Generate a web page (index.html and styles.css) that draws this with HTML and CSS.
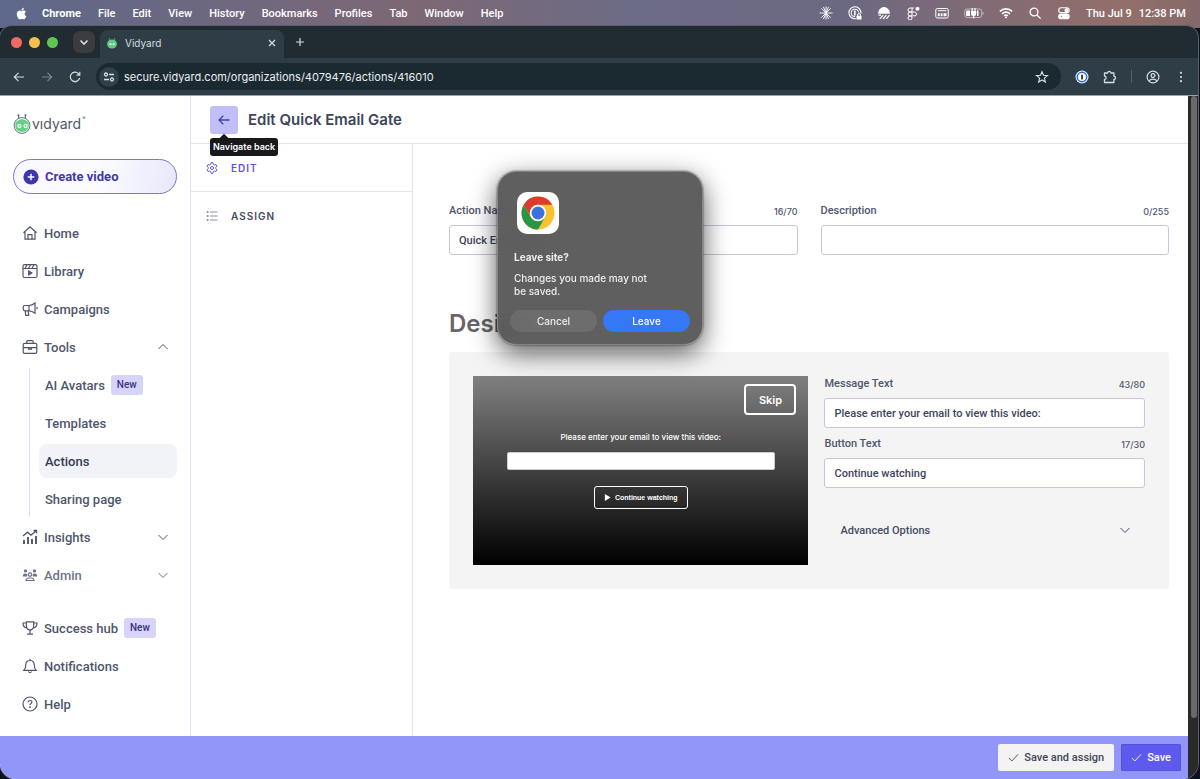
FILE: index.html
```
<!DOCTYPE html>
<html lang="en">
<head>
<meta charset="utf-8">
<title>Vidyard</title>
<link rel="stylesheet" href="styles.css">
</head>
<body>
<div class="desktop">
  <nav class="menubar" aria-label="Menu bar">
    <svg class="apple" viewBox="0 0 24 24" fill="currentColor"><path d="M17 12.700c0-2.300 1.900-3.400 2-3.500-1.100-1.600-2.800-1.800-3.400-1.900-1.400-.1-2.800.9-3.500.9s-1.900-.9-3.100-.8c-1.600 0-3 .9-3.800 2.300-1.700 2.800-.4 7 1.200 9.300.8 1.100 1.700 2.400 2.900 2.300 1.200 0 1.600-.7 3.100-.7s1.900.7 3.100.7c1.300 0 2.100-1.100 2.900-2.300.9-1.300 1.300-2.600 1.300-2.700-.1 0-2.700-1-2.700-3.600zM14.700 5.800c.6-.8 1.100-1.900 1-3-.9 0-2.100.6-2.700 1.400-.6.7-1.100 1.800-1 2.900 1 .1 2-.5 2.700-1.300z"/></svg>
    <b>Chrome</b><span>File</span><span>Edit</span><span>View</span><span>History</span><span>Bookmarks</span><span>Profiles</span><span>Tab</span><span>Window</span><span>Help</span>
    <div class="status">
      <svg viewBox="0 0 14 14" stroke="currentColor" stroke-width="1.300" stroke-linecap="round"><path d="M7 .8v12.400M.8 7h12.400M2.600 2.600l8.800 8.800M11.400 2.600l-8.800 8.800M4.600 1.300l4.800 11.400M9.400 1.300 4.600 12.700" stroke-width=".9"/></svg>
      <svg viewBox="0 0 14 14" fill="none" stroke="currentColor"><path d="M8 12.700A6 6 0 1 1 12.900 7.500" stroke-width="1.100"/><path d="M7 10.700A3.800 3.800 0 1 1 10.700 6.500" stroke-width="1"/><path d="M6.800 4.500v5" stroke-width="1.600"/><rect x="8.500" y="9.800" width="5" height="3.700" rx=".6" fill="currentColor" stroke="none"/><path d="M9.600 10V9a1.400 1.400 0 0 1 2.800 0v1"/></svg>
      <svg viewBox="0 0 14 14" fill="currentColor"><path d="M1 7.800a6 6.800 0 0 1 12 0z"/><path d="M1.500 9.200h2.500M2.800 12.800l3.400-3.600M6 13l3.400-3.800M9.300 12.800l3.200-3.600" stroke="currentColor" fill="none" stroke-width="1.200"/></svg>
      <svg viewBox="0 0 14 14" fill="none" stroke="currentColor" stroke-width="1"><path d="M6 2H4a2 2 0 0 0 0 4h2zM6 6H4a2 2 0 0 0 0 4h2zM6 10H4a2 2 0 1 0 2 2zM6 2h2M6 6h2.500a2 2 0 1 1-1.800 2.800"/><circle cx="11.500" cy="2.800" r="2" fill="currentColor" stroke="none"/></svg>
      <svg viewBox="0 0 14 14" fill="none" stroke="currentColor"><rect x=".8" y="2.500" width="12.400" height="9.500" rx="1.500"/><path d="M2.800 4.700h8.500" stroke-width="1"/><path d="M2.800 8.700h2M5.700 8.700h1.800M8.500 8.700h3" stroke-width="3"/></svg>
      <svg class="battery" viewBox="0 0 20 14" fill="none" stroke="currentColor"><rect x=".7" y="3" width="17" height="8.500" rx="2.400" opacity=".5"/><path d="M2 5.500Q2 4.500 3 4.500H6v5.600H3Q2 10 2 9zM13 4.500h1.500v5.600H13z" fill="currentColor" stroke="none"/><path d="M8.200 2v3M11 2v3" stroke-width="1.200"/><path d="M7 5h5.200v2.500a2.600 2.600 0 0 1-5.200 0zM9 9h1.200v3.500H9z" fill="currentColor" stroke="none"/><path d="M19 6v2.600" opacity=".5"/></svg>
      <svg viewBox="0 0 14 14" fill="none" stroke="currentColor" stroke-width="1.700"><path d="M.9 5.400a8.700 8.700 0 0 1 12.200 0M3.100 7.800a5.600 5.600 0 0 1 7.800 0M5.200 10a2.600 2.600 0 0 1 3.600 0"/><circle cx="7" cy="11.400" r=".9" fill="currentColor" stroke="none"/></svg>
      <svg viewBox="0 0 14 14" fill="none" stroke="currentColor" stroke-width="1.300"><circle cx="6" cy="6" r="3.900"/><path d="m9 9 3.600 3.600"/></svg>
      <svg viewBox="0 0 14 14" fill="none" stroke="currentColor" stroke-width="1.100"><rect x="1.700" y="1.800" width="10.500" height="4.800" rx="2.400"/><circle cx="9.500" cy="4.200" r="1.500" fill="currentColor"/><rect x="1.700" y="8" width="10.500" height="4.800" rx="2.400" fill="currentColor"/><circle cx="4.300" cy="10.400" r="1.100" fill="#75697a"/></svg>
      <time><span>Thu Jul 9</span><span>12:38 PM</span></time>
    </div>
  </nav>

  <div class="browser">
    <div class="tabstrip">
      <i class="light red"></i><i class="light yellow"></i><i class="light green"></i>
      <button class="tab-search" aria-label="Search tabs"><svg viewBox="0 0 12 12" fill="none" stroke="currentColor" stroke-width="1.600"><path d="m2.500 4.500 3.500 3.500 3.500-3.500"/></svg></button>
      <div class="tab">
        <svg class="favicon" viewBox="0 0 12 12"><path d="m4 4-1-3M8 4l1-3" stroke="#6b7b80" fill="none"/><ellipse cx="6" cy="7" rx="5" ry="4.600" fill="#5fca81"/><circle cx="4.500" cy="7.300" r="1" fill="#fff"/><circle cx="7.600" cy="7.300" r="1" fill="#fff"/></svg>
        <span>Vidyard</span>
        <button class="plain" aria-label="Close tab"><svg viewBox="0 0 12 12" fill="none" stroke="currentColor" stroke-width="1.300"><path d="m3 3 6 6M9 3 3 9"/></svg></button>
      </div>
      <button class="plain" aria-label="New tab"><svg viewBox="0 0 12 12" fill="none" stroke="currentColor" stroke-width="1.200"><path d="M6 2v8M2 6h8"/></svg></button>
    </div>
    <div class="toolbar">
      <button class="plain" aria-label="Back"><svg viewBox="0 0 14 14" fill="none" stroke="currentColor" stroke-width="1.200"><path d="M12 7H2.500M6.500 2.800 2.300 7l4.200 4.200"/></svg></button>
      <button class="plain dim" aria-label="Forward"><svg viewBox="0 0 14 14" fill="none" stroke="currentColor" stroke-width="1.200"><path d="M2 7h9.500M7.500 2.800 11.700 7l-4.200 4.200"/></svg></button>
      <button class="plain" aria-label="Reload"><svg viewBox="0 0 14 14" fill="none" stroke="currentColor" stroke-width="1.200"><path d="M11.600 8a4.700 4.700 0 1 1-1-4.200l1.100 1.200M11.800 1.800v3.400H8.500"/></svg></button>
      <div class="omnibox">
        <span class="site"><svg viewBox="0 0 12 12" fill="none" stroke="currentColor" stroke-width="1.300"><circle cx="3" cy="3.500" r="1.500"/><path d="M6 3.500h5M1 8.500h5"/><circle cx="9" cy="8.500" r="1.500"/></svg></span>
        <input class="url" aria-label="Address" value="secure.vidyard.com/organizations/4079476/actions/416010">
        <svg viewBox="0 0 14 14" fill="none" stroke="currentColor" stroke-width="1.200"><path d="m7 1.800 1.500 3.500 3.900.3-3 2.500.9 3.800L7 9.900l-3.300 2 .9-3.800-3-2.500 3.900-.3z"/></svg>
      </div>
      <svg viewBox="0 0 14 14"><circle cx="7" cy="7" r="6.500" fill="#e8efff"/><circle cx="7" cy="7" r="4.700" fill="#fff" stroke="#2c6cdb" stroke-width="1.500"/><rect x="6.200" y="4.400" width="1.700" height="5.200" rx=".7" fill="#222"/></svg>
      <svg viewBox="0 0 14 14" fill="none" stroke="currentColor" stroke-width="1.300"><path d="M1.500 3h3.200a1.600 1.600 0 0 1 3.200 0h3v3.200a1.600 1.600 0 0 1 0 3.200v3.100H1.500V9.300a1.600 1.600 0 0 0 0-3.200z" stroke-linejoin="round"/></svg>
      <i class="divider"></i>
      <svg viewBox="0 0 14 14" fill="none" stroke="currentColor" stroke-width="1.200"><circle cx="7" cy="7" r="5.900"/><circle cx="7" cy="5.500" r="1.900"/><path d="M2.900 11c1.700-2.400 6.500-2.400 8.200 0"/></svg>
      <svg viewBox="0 0 14 14" fill="currentColor"><circle cx="7" cy="2.800" r="1.100"/><circle cx="7" cy="7" r="1.100"/><circle cx="7" cy="11.200" r="1.100"/></svg>
    </div>

    <div class="viewport">
      <div class="page">
        <div class="columns">
          <aside class="sidebar">
            <a class="logo" href="#" aria-label="Vidyard home">
              <svg viewBox="0 0 18 20" fill="none"><path d="M6 5.500 5.500 1M12 5.500 12.500 1M4.500 1h2M11.500 1h2" stroke="#454c5e"/><circle cx="9" cy="11.500" r="7.900" stroke="#454c5e" stroke-width=".8" fill="#fff"/><path d="M2.500 8.500Q9 1.500 15.500 8.500 17.500 17.500 9 18 .5 17.500 2.500 8.500z" fill="#62d183"/><circle cx="6.400" cy="12" r="1.600" stroke="#fff" stroke-width="1.100"/><circle cx="12.600" cy="12" r="1.600" stroke="#fff" stroke-width="1.100"/></svg>
              <span>vıdyard</span><sup>®</sup>
            </a>
            <button class="create"><svg viewBox="0 0 16 16"><circle cx="8" cy="8" r="7.600" fill="#3e36b0"/><path d="M8 4.700v6.600M4.700 8h6.600" stroke="#fff" stroke-width="1.500"/></svg>Create video</button>
            <nav class="nav">
              <a href="#"><svg class="icon" viewBox="0 0 16 16"><path d="M1.500 7.800 8 1.800l6.500 6M3 7v7.200h10V7M6 14V9.600h4V14"/></svg>Home</a>
              <a href="#"><svg class="icon" viewBox="0 0 16 16"><rect x="1" y="1.700" width="14" height="12.800" rx="1.500"/><path d="M1 5.500h14M3 5.500l2-3.700M6.500 5.500l2-3.700M10 5.500l2-3.700"/><path d="m6.700 8 3.200 2-3.200 2z" fill="currentColor"/></svg>Library</a>
              <a href="#"><svg class="icon" viewBox="0 0 16 16"><path d="M7 4.500H3Q1.200 4.500 1.200 6.200v1.900Q1.200 9.800 3 9.800h4c2.200 0 4.200 1 6 2.500V2C11.200 3.500 9.200 4.500 7 4.500zM7 4.500v5.300M3.200 10l.6 4.300h3L6.200 10M13 1.500v11.200M15 6v2.300"/></svg>Campaigns</a>
              <a href="#"><svg class="icon" viewBox="0 0 16 16"><rect x="1.200" y="4.300" width="13.600" height="10" rx="1.400"/><path d="M4.800 4.300V2.600q0-1 1-1h4.400q1 0 1 1v1.700M1.200 8.600h13.600M6.500 8.800v1.400h3V8.800"/></svg>Tools<svg class="chevron up" viewBox="0 0 12 12"><path d="m1.500 4 4.500 4.500L10.500 4"/></svg></a>
              <div class="subnav">
                <a href="#">AI Avatars<span class="badge">New</span></a>
                <a href="#">Templates</a>
                <a href="#" class="active">Actions</a>
                <a href="#">Sharing page</a>
              </div>
              <a href="#"><svg class="icon" viewBox="0 0 16 16"><path d="m1 7 4.500-3.800L9 6.200l5.500-4.700M11.500 1.500h3v2.800" stroke-width="1.400"/><path d="M2 15v-4M6 15V8M10 15v-5M14 15V7" stroke-width="1.900"/></svg>Insights<svg class="chevron" viewBox="0 0 12 12"><path d="m1.500 4 4.500 4.500L10.500 4"/></svg></a>
              <a href="#" class="muted"><svg class="icon" viewBox="0 0 16 16"><circle cx="3.500" cy="3.900" r="1.700" fill="currentColor" stroke="none"/><circle cx="12.500" cy="3.900" r="1.700" fill="currentColor" stroke="none"/><path d="M.8 9.500q0-3 2.700-3 1.500 0 2 1.500l-.6 1.500zM15.200 9.500q0-3-2.700-3-1.500 0-2 1.500l.6 1.500z" fill="currentColor" stroke="none"/><circle cx="8" cy="7.600" r="1.700"/><path d="M4 13.500q.4-2.500 2.600-2.500h2.800q2.200 0 2.600 2.500z"/></svg>Admin<svg class="chevron" viewBox="0 0 12 12"><path d="m1.500 4 4.500 4.500L10.500 4"/></svg></a>
            </nav>
            <nav class="nav lower">
              <a href="#"><svg class="icon" viewBox="0 0 16 16"><path d="M4.300 1.800h7.400v3.700q0 4-3.700 4.700-3.700-.7-3.700-4.700zM4.300 3H1q0 4.500 3.800 5M11.700 3H15q0 4.500-3.800 5M8 10.200v3.500M5 14.200h6"/></svg>Success hub<span class="badge">New</span></a>
              <a href="#"><svg class="icon" viewBox="0 0 16 16"><path d="M8 1v1.300M2 12.300q1.700-1.500 1.700-5.300Q4 2.500 8 2.500T12.300 7q0 3.800 1.700 5.300zM6.400 13.500Q8 15.700 9.600 13.500"/></svg>Notifications</a>
              <a href="#"><svg class="icon" viewBox="0 0 16 16"><circle cx="8" cy="8" r="7"/><path d="M6 6.300Q6.200 4.500 8 4.500t2 1.600Q10 7.200 8.800 7.700 8 8.100 8 9.200"/><circle cx="8" cy="11.300" r=".4"/></svg>Help</a>
            </nav>
          </aside>

          <main class="main">
            <header class="page-header">
              <button class="back" aria-label="Navigate back"><svg viewBox="0 0 14 14" fill="none" stroke="currentColor" stroke-width="1.300"><path d="M12.500 7H2M6.300 2.800 2 7l4.300 4.200"/></svg><span class="tooltip">Navigate back</span></button>
              <h1>Edit Quick Email Gate</h1>
            </header>
            <div class="workspace">
              <nav class="steps">
                <a href="#" class="current"><svg viewBox="0 0 12 12"><path d="M4.700 2.300 5 .8h2l.3 1.500 1.200.7 1.500-.5 1 1.700L9.900 5.300v1.400L11 7.800l-1 1.700L8.500 9l-1.200.7L7 11.200H5l-.3-1.500L3.500 9 2 9.500 1 7.800l1.100-1.100V5.300L1 4.200l1-1.700 1.500.5z" stroke-linejoin="round"/><circle cx="6" cy="6" r="1.500"/></svg>EDIT</a>
                <a href="#"><svg viewBox="0 0 12 12"><path d="M4 2h7.500M4 6h7.500M4 10h7.500"/><path d="M.8 2h1.700M.8 6h1.700M.8 10h1.700" stroke-width="1.800"/></svg>ASSIGN</a>
              </nav>
              <form class="editor" onsubmit="return false">
                <div class="basics">
                  <div class="field"><div class="caption"><label for="name">Action Name</label><output>16/70</output></div><input id="name" value="Quick Email Gate"></div>
                  <div class="field"><div class="caption"><label for="desc">Description</label><output>0/255</output></div><input id="desc"></div>
                </div>
                <h2>Design</h2>
                <section class="panel">
                  <div class="preview">
                    <button class="skip" type="button">Skip</button>
                    <label for="email">Please enter your email to view this video:</label>
                    <input id="email" type="email">
                    <button class="continue" type="button"><svg viewBox="0 0 8 8" fill="currentColor"><path d="m1 0 6.500 4L1 8z"/></svg>Continue watching</button>
                  </div>
                  <div class="options">
                    <div class="field"><div class="caption"><label for="msg">Message Text</label><output>43/80</output></div><input id="msg" value="Please enter your email to view this video:"></div>
                    <div class="field"><div class="caption"><label for="btn">Button Text</label><output>17/30</output></div><input id="btn" value="Continue watching"></div>
                    <button class="advanced" type="button">Advanced Options<svg class="chevron" viewBox="0 0 12 12"><path d="m1.500 4 4.500 4.500L10.500 4"/></svg></button>
                  </div>
                </section>
              </form>
            </div>
          </main>
        </div>
        <footer class="actions">
          <button class="secondary"><svg viewBox="0 0 12 12"><path d="m1 6.500 3.200 3.300L11 2.500"/></svg>Save and assign</button>
          <button class="primary"><svg viewBox="0 0 12 12"><path d="m1 6.500 3.200 3.300L11 2.500"/></svg>Save</button>
        </footer>
      </div>
      <div class="scrollbar"><i></i></div>
    </div>
  </div>

  <div class="dialog" role="alertdialog" aria-labelledby="dialog-title">
    <svg class="chrome" viewBox="0 0 42 42"><rect width="42" height="42" rx="10" fill="#fff"/><circle cx="21" cy="21" r="16.500" fill="#f9c22e"/><path d="M6.700 12.800A16.500 16.500 0 0 1 35.300 12.800H21a8.200 8.200 0 0 0-7.100 12.300z" fill="#dc3b2e"/><path d="M6.700 12.800A16.500 16.500 0 0 0 21 37.500l7.100-12.300a8.200 8.200 0 0 1-14.200 0z" fill="#2a9547"/><circle cx="21" cy="21" r="8.200" fill="#fff"/><circle cx="21" cy="21" r="6.500" fill="#3b72dc"/></svg>
    <strong id="dialog-title">Leave site?</strong>
    <p>Changes you made may not<br>be saved.</p>
    <div class="choices"><button>Cancel</button><button class="confirm">Leave</button></div>
  </div>
</div>
</body>
</html>
```

FILE: styles.css
```
* { box-sizing: border-box; }
body { margin: 0; font-family: Inter, "Liberation Sans", sans-serif; }
button, input { font: inherit; color: inherit; margin: 0; }
button { padding: 0; border: 0; background: none; }
a { color: inherit; text-decoration: none; }
svg { flex: none; display: block; }

.desktop {
  position: relative;
  display: flex;
  flex-direction: column;
  height: 100vh;
  overflow: hidden;
  background: linear-gradient(90deg, #5d688a, #70687f 20%, #7d6874 34%, #6d6c86 52%, #6b6882 70%, #826b75 82%, #936f6a 94%, #84696a) top / 100% 28px no-repeat #0c1020;
}

/* menu bar */
.menubar { display: flex; align-items: center; gap: 17px; height: 26px; padding: 0 14px; color: #fff; font-family: Roboto, sans-serif; font-size: 11px; font-weight: 500; }
.apple { width: 15px; height: 15px; margin-right: -4px; }
.status { display: flex; align-items: center; gap: 15px; margin-left: auto; }
.status svg { width: 14px; height: 14px; }
.status .battery { width: 20px; }
.status time { display: flex; gap: 7px; }

/* browser window */
.browser { flex: 1; min-height: 0; display: flex; flex-direction: column; overflow: hidden; margin-right: 2px; border-radius: 12px 12px 16px 16px; background: #212c32; box-shadow: 0 0 0 1px #5a5f69; color: #d5dde0; }
.tabstrip { display: flex; align-items: center; height: 32px; padding-left: 11px; font-size: 10px; }
.light { width: 11px; height: 11px; margin-right: 7px; border-radius: 50%; }
.red { background: #ee6a63; }
.yellow { background: #f4bf4c; }
.green { background: #60c554; }
.tab-search { display: grid; place-items: center; width: 22px; height: 22px; margin: 0 5px 0 8px; border-radius: 7px; background: #3b3c3e; }
.tabstrip svg { width: 12px; height: 12px; }
.tab { display: flex; align-items: center; gap: 7px; align-self: end; width: 184px; height: 28px; padding: 0 6px 2px; margin-right: 10px; border-radius: 8px 8px 0 0; background: #2f3e46; }
.tab .plain { margin-left: auto; }
.toolbar { display: flex; align-items: center; gap: 14px; height: 37px; padding: 0 10px 0 12px; background: #2f3e46; }
.toolbar svg { width: 14px; height: 14px; }
.dim { opacity: .45; }
.omnibox { flex: 1; display: flex; align-items: center; height: 27px; padding: 0 12px 0 3px; border-radius: 14px; background: #1b2931; }
.site { display: grid; place-items: center; width: 20px; height: 20px; border-radius: 50%; background: #304049; }
.site svg { width: 12px; height: 12px; }
.url { flex: 1; min-width: 0; padding: 0 5px; border: 0; background: none; font-size: 11px; color: #e9eef0; }
.divider { width: 1px; height: 13px; background: #526069; }
.viewport { flex: 1; min-height: 0; display: flex; border-top: 1px solid #9aa1a8; background: #2a2a2b; }
.scrollbar { width: 10px; padding-left: 3px; }
.scrollbar i { display: block; width: 6px; height: calc(100% - 61px); border-radius: 4px; background: #696969; }

/* app */
.page { flex: 1; min-width: 0; display: flex; flex-direction: column; background: #fff; color: #4f566b; font-family: Roboto, sans-serif; }
.columns { flex: 1; min-height: 0; display: flex; }
.sidebar { width: 191px; padding: 17px 13px 0; border-right: 1px solid #e3e3f1; font-size: 13px; font-weight: 500; }
.logo { display: flex; align-items: center; gap: 1px; height: 22px; color: #50586a; font: 400 14px/22px Inter, sans-serif; }
.logo svg { width: 18px; height: 20px; }
.logo sup { align-self: start; font-size: 5px; line-height: 10px; }
.create { display: flex; align-items: center; gap: 6px; width: 100%; height: 35px; margin: 24px 0 22px; padding: 0 9px; border: 1px solid #8274cf; border-radius: 18px; background: linear-gradient(100deg, #f8f8ff, #fcfcff 50%, #e8e8fc); color: #4039ab; font-weight: 700; }
.create svg { width: 16px; height: 16px; }
.nav { display: grid; gap: 4px; }
.nav a { display: flex; align-items: center; height: 34px; padding: 0 8px 0 9px; gap: 6px; border-radius: 8px; }
.lower { margin-top: 19px; }
.icon, .chevron { fill: none; stroke: currentColor; stroke-width: 1.2; }
.icon { width: 16px; height: 16px; }
.chevron { width: 12px; height: 12px; margin-left: auto; stroke-width: 1; }
.up { rotate: 180deg; }
.subnav { display: grid; gap: 4px; margin-left: 16px; padding-left: 9px; border-left: 1px solid #dedff0; }
.nav .subnav a { padding: 0 6px; }
.nav .active { background: #f2f2f9; color: #343b50; }
.muted { color: #6f7589; }
.badge { padding: 3px 6px; border-radius: 3px; background: #d6d4fb; color: #3a3280; font-size: 10px; line-height: 14px; }

.main { flex: 1; min-width: 0; display: flex; flex-direction: column; }
.page-header { display: flex; align-items: center; gap: 10px; height: 48px; padding: 0 19px; border-bottom: 1px solid #e5e5f1; }
h1 { margin: 0; color: #3e4558; font: 600 15px/20px Inter, sans-serif; }
.back { position: relative; display: grid; place-items: center; width: 28px; height: 28px; border-radius: 3px; background: #c1bffa; color: #4a3fb0; }
.back svg { width: 14px; height: 14px; }
.tooltip { position: absolute; top: 32px; left: 0; padding: 2px 3px; border-radius: 3px; background: #18191d; color: #fff; font: 600 9px/14px Inter, sans-serif; white-space: nowrap; }
.tooltip::before { content: ""; position: absolute; top: -3px; left: 11px; width: 6px; height: 6px; rotate: 45deg; background: #18191d; }
.workspace { flex: 1; min-height: 0; display: flex; }
.steps { width: 222px; border-right: 1px solid #e5e5f1; font: 600 10px/14px Inter, sans-serif; letter-spacing: 1px; }
.steps a { display: flex; align-items: center; gap: 13px; height: 48px; padding-left: 15px; color: #454c5d; }
.steps svg { width: 12px; height: 12px; fill: none; stroke: #8d93a5; stroke-width: 1; }
.steps .current { border-bottom: 1px solid #e5e5f1; color: #6254de; }
.steps .current svg { stroke: #6254de; }

.editor { flex: 1; min-width: 0; padding: 59px 19px 0 36px; font-size: 11px; font-weight: 500; }
.basics { display: grid; grid-template-columns: 1fr 1fr; gap: 23px; }
.caption { display: flex; justify-content: space-between; align-items: end; height: 16px; margin-bottom: 6px; line-height: 16px; }
.caption output { font: 500 9px/14px Inter, sans-serif; }
.field input { display: block; width: 100%; height: 30px; padding: 0 9px; border: 1px solid #c5c6db; border-radius: 3px; background: #fff; color: #3e4558; }
h2 { margin: 52px 0 11px; color: #666; font: 600 24px/34px Inter, sans-serif; }
.panel { display: grid; grid-template-columns: 336fr 321fr; gap: 16px; align-items: start; padding: 24px; border-radius: 3px; background: #f4f4f4; }
.preview { position: relative; display: flex; flex-direction: column; align-items: center; aspect-ratio: 16 / 9; padding-top: 54px; background: linear-gradient(#808080, #000); color: #fff; font: 500 8px/14px Inter, sans-serif; }
.preview input { width: 80%; height: 18px; margin: 8px 0 16px; border: 1px solid #ccc; border-radius: 2px; background: #fff; color: #222; }
.skip { position: absolute; top: 8px; right: 12px; width: 52px; height: 31px; border: 2px solid #fff; border-radius: 4px; font: 600 11px/14px Inter, sans-serif; }
.continue { display: flex; align-items: center; gap: 4px; height: 23px; padding: 0 9px; border: 1px solid #fff; border-radius: 3px; font: bold 7px/14px "Liberation Sans", Arial, sans-serif; }
.continue svg { width: 7px; height: 7px; }
.options { display: grid; gap: 8px; }
.advanced { display: flex; align-items: center; height: 30px; margin-top: 19px; padding: 0 14px 0 16px; color: #454c60; }

.actions { display: flex; align-items: center; justify-content: flex-end; gap: 7px; height: 43px; padding-right: 7px; background: #9196f8; font-size: 11px; font-weight: 500; }
.actions button { display: flex; align-items: center; gap: 5px; height: 27px; padding: 0 10px; border-radius: 2px; }
.actions svg { width: 11px; height: 11px; fill: none; stroke: currentColor; stroke-width: 1; }
.secondary { background: #f3f3f4; color: #3f4658; }
.primary { background: #5f5aef; color: #fff; box-shadow: 0 0 0 1px #5751dc inset; }

/* modal alert */
.dialog { position: absolute; top: 171px; left: 50%; translate: -50% 0; width: 206px; padding: 20px 12px 12px; border: 1px solid #858585; border-radius: 19px; background: rgba(86, 86, 86, .95); backdrop-filter: blur(8px); box-shadow: 0 8px 26px rgba(0, 0, 0, .65), 0 0 2px rgba(0, 0, 0, .7); color: #ededed; font-size: 10px; line-height: 13px; }
.chrome { width: 42px; height: 42px; margin: 0 0 17px 7px; }
.dialog strong { display: block; margin-left: 4px; }
.dialog p { margin: 8px 4px 12px; font-weight: 500; }
.choices { display: grid; grid-template-columns: 1fr 1fr; gap: 6px; }
.choices button { height: 22px; border-radius: 11px; background: rgba(255, 255, 255, .09); font-weight: 500; }
.choices .confirm { background: #3478f6; color: #fff; }
```
